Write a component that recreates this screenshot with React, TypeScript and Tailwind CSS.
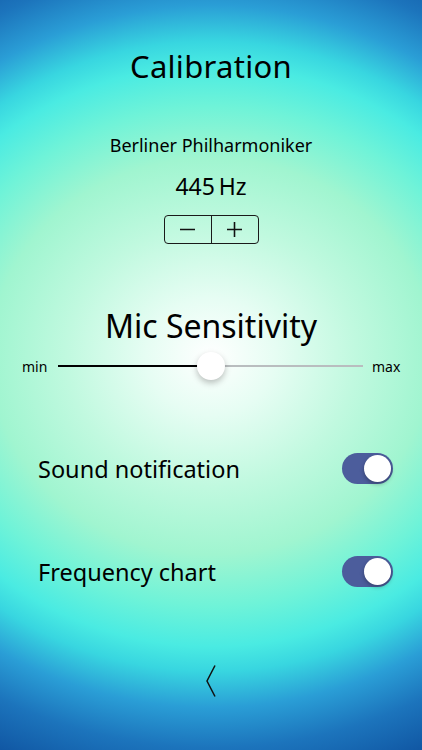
import React, { useState } from 'react';

const Toggle: React.FC<{ on: boolean; onChange: () => void }> = ({ on, onChange }) => (
  <button
    onClick={onChange}
    className={`relative w-[51px] h-[31px] rounded-full flex-shrink-0 ${on ? 'bg-[#4c5d9c]' : 'bg-[#d9dde6]'}`}
  >
    <span
      className={`absolute top-[2px] w-[27px] h-[27px] rounded-full bg-white shadow-[0_2px_4px_rgba(0,0,0,0.3)] ${on ? 'left-[22px]' : 'left-[2px]'}`}
    />
  </button>
);

export default function App() {
  const [hz, setHz] = useState(445);
  const [sound, setSound] = useState(true);
  const [chart, setChart] = useState(true);
  const level = 50;

  return (
    <div
      className="w-[422px] h-[750px] overflow-hidden flex flex-col text-black bg-[radial-gradient(ellipse_500px_450px_at_50%_47.5%,#ffffff_0%,#e6fdf3_13%,#c0f9df_29%,#a0f5d0_44%,#6ff3d8_55.5%,#4aebe2_64.5%,#38d6e0_70%,#2a9ed6_78%,#1c74bc_87%,#0c4c9a_101%)]"
      style={{ fontFamily: '"Noto Sans", Lato, sans-serif' }}
    >
      <h1 className="mt-[46px] text-center text-[31px] leading-[40px] tracking-[0.3px]">Calibration</h1>

      <div className="mt-[48px] text-center text-[18px] leading-[22px]">Berliner Philharmoniker</div>
      <div className="mt-[17px] text-center text-[23px] leading-[26px]">{hz}&thinsp;Hz</div>

      <div className="mt-[16px] flex justify-center">
        <div className="flex w-[95px] h-[29px] border border-[#1a1a1a] rounded-[4px] overflow-hidden">
          <button onClick={() => setHz(hz - 1)} className="flex-1 flex items-center justify-center border-r border-[#1a1a1a]">
            <svg width="17" height="17" viewBox="0 0 17 17"><path d="M1 8.5h15" stroke="#111" strokeWidth="1.6" /></svg>
          </button>
          <button onClick={() => setHz(hz + 1)} className="flex-1 flex items-center justify-center">
            <svg width="17" height="17" viewBox="0 0 17 17"><path d="M1 8.5h15M8.5 1v15" stroke="#111" strokeWidth="1.6" /></svg>
          </button>
        </div>
      </div>

      <h2 className="mt-[64px] text-center text-[32px] leading-[36px]">Mic Sensitivity</h2>

      <div className="mt-[7px] flex items-center px-[22px] h-[30px]">
        <span className="text-[14px] w-[24px]">min</span>
        <div className="relative flex-1 ml-[12px] mr-[9px] h-[30px] flex items-center">
          <div className="h-[2px] bg-black" style={{ width: `${level}%` }} />
          <div className="h-[2px] flex-1 bg-[#b9bdbf]" />
          <span
            className="absolute top-[1px] w-[28px] h-[28px] -ml-[14px] rounded-full bg-white shadow-[0_3px_6px_rgba(0,0,0,0.25)]"
            style={{ left: `${level}%` }}
          />
        </div>
        <span className="text-[14px] w-[28px] text-right">max</span>
      </div>

      <div className="mt-[72px] flex items-center justify-between pl-[38px] pr-[29px]">
        <span className="text-[23.5px] leading-[28px]">Sound notification</span>
        <Toggle on={sound} onChange={() => setSound(!sound)} />
      </div>

      <div className="mt-[72px] flex items-center justify-between pl-[38px] pr-[29px]">
        <span className="text-[23.5px] leading-[28px]">Frequency chart</span>
        <Toggle on={chart} onChange={() => setChart(!chart)} />
      </div>

      <div className="mt-[77px] flex justify-center">
        <button>
          <svg width="12" height="34" viewBox="0 0 12 34">
            <path d="M10 1.5L2 17l8 15.5" fill="none" stroke="#111" strokeWidth="1.5" />
          </svg>
        </button>
      </div>
    </div>
  );
}
